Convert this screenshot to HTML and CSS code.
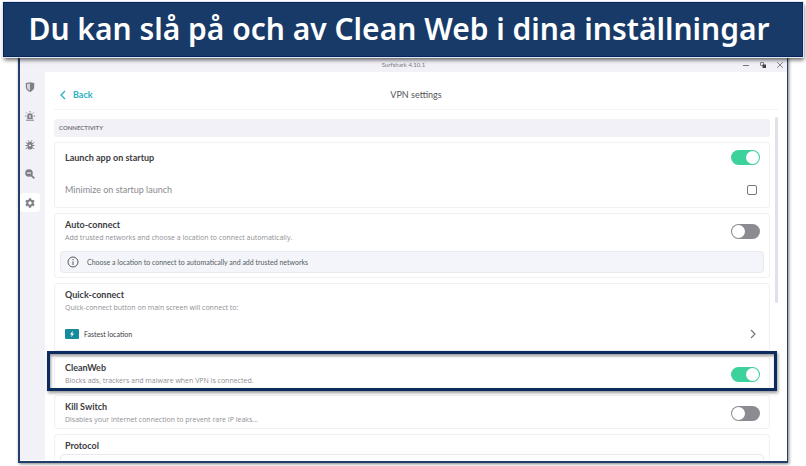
FILE: index.html
```html
<!DOCTYPE html>
<html lang="sv">
<head>
    <meta charset="UTF-8">
    <meta name="viewport" content="width=device-width, initial-scale=1.0">
    <title>VPN settings</title>
    <link rel="stylesheet" href="styles.css">
</head>
<body>

    <!-- Caption -->
    <h1 class="banner">Du kan slå på och av Clean Web i dina inställningar</h1>

    <div class="window" lang="en">
        <!-- Title bar -->
        <div class="titlebar">
            <span class="app-name">Surfshark 4.10.1</span>
            <div class="window-buttons">
                <button aria-label="Minimize"><svg width="8" height="8" viewBox="0 0 8 8"><path d="M1 4.5h6" stroke="#777" fill="none"/></svg></button>
                <button aria-label="Restore"><svg width="8" height="8" viewBox="0 0 8 8"><path d="M1.500 1.500h3v3h-3z" stroke="#888" fill="none"/><path d="M3.500 3.500H7V7H3.500z" fill="#444"/></svg></button>
                <button aria-label="Close"><svg width="8" height="8" viewBox="0 0 8 8"><path d="M1.200 1.200l5.600 5.600M6.800 1.200L1.200 6.800" stroke="#666" stroke-width=".8" fill="none"/></svg></button>
            </div>
        </div>

        <div class="main">
            <!-- Sidebar -->
            <nav class="sidebar">
                <a href="#vpn" aria-label="VPN">
                    <svg width="10" height="10" viewBox="0 0 10 10"><path d="M5 .3L9.200 1v4C9.200 7.500 7.300 9.200 5 9.900 2.700 9.200.8 7.500.8 5V1z" fill="#7f7f85"/><path d="M5 1.500l-3 .5v3c0 1.700 1.200 3 3 3.700z" fill="#d5d5db"/></svg>
                </a>
                <a href="#alert" aria-label="Alert">
                    <svg width="10" height="10" viewBox="0 0 10 10"><path d="M2.300 8V5a2.700 2.700 0 0 1 5.400 0v3z" fill="#7f7f85"/><path d="M5 4v3" stroke="#f2f1f8" stroke-width="1.200"/><path d="M1 9.200h8M5 0v1.400M1.300 1.500l1 1M8.700 1.500l-1 1M0 5h1.400M10 5H8.600" stroke="#7f7f85" fill="none"/></svg>
                </a>
                <a href="#antivirus" aria-label="Antivirus">
                    <svg width="10" height="10" viewBox="0 0 10 10"><rect x="2.500" y="1.800" width="5" height="7.700" rx="2.500" fill="#7f7f85"/><path d="M3 .3l1 1.500M7 .3L6 1.800M.8 2.500l2 1.200M9.200 2.500l-2 1.200M.5 5.500h9M.8 8.700l2-1.200M9.200 8.700l-2-1.200" stroke="#7f7f85" fill="none"/><path d="M4 5.500h2" stroke="#f2f1f8" stroke-width="1.500"/></svg>
                </a>
                <a href="#search" aria-label="Search">
                    <svg width="10" height="10" viewBox="0 0 10 10"><circle cx="4" cy="4" r="3.800" fill="#7f7f85"/><path d="M6.300 6.300l3 3" stroke="#7f7f85" stroke-width="1.800"/><path d="M2 4h4" stroke="#f2f1f8" stroke-width="1.200"/></svg>
                </a>
                <a href="#settings" aria-label="Settings" class="active">
                    <svg width="10" height="10" viewBox="0 0 10 10"><path d="M4 .3h2l.3 1.300 1 .6 1.300-.4 1 1.700-1 .9v1.200l1 .9-1 1.700-1.300-.4-1 .6L6 9.700H4l-.3-1.300-1-.6-1.300.4-1-1.700 1-.9V4.400l-1-.9 1-1.700 1.300.4 1-.6z" fill="#7f7f85"/><circle cx="5" cy="5" r="1.700" fill="#fff"/></svg>
                </a>
            </nav>

            <main class="content">
                <header class="page-header">
                    <a href="#back" class="back">
                        <svg width="6" height="10" viewBox="0 0 6 10"><path d="M5 1L1 5l4 4" fill="none" stroke="#2bb0be" stroke-width="1.300"/></svg>
                        Back
                    </a>
                    <h2>VPN settings</h2>
                </header>

                <!-- Settings list -->
                <div class="scroll-area">
                    <div class="list">
                        <h3 class="group-title">CONNECTIVITY</h3>

                        <section class="card">
                            <div class="row startup">
                                <label class="title" for="launch">Launch app on startup</label>
                                <input type="checkbox" class="toggle" id="launch" checked>
                            </div>
                            <div class="row minimize">
                                <label for="minimize">Minimize on startup launch</label>
                                <input type="checkbox" class="tick" id="minimize">
                            </div>
                        </section>

                        <section class="card">
                            <div class="row">
                                <div>
                                    <label class="title" for="auto">Auto-connect</label>
                                    <p>Add trusted networks and choose a location to connect automatically.</p>
                                </div>
                                <input type="checkbox" class="toggle" id="auto">
                            </div>
                            <div class="info">
                                <svg width="12" height="12" viewBox="0 0 12 12"><circle cx="6" cy="6" r="5" fill="none" stroke="#555b61"/><path d="M6 5.300V9M6 3v1.200" stroke="#555b61"/></svg>
                                Choose a location to connect to automatically and add trusted networks
                            </div>
                        </section>

                        <section class="card">
                            <div class="row">
                                <div>
                                    <h4 class="title">Quick-connect</h4>
                                    <p>Quick-connect button on main screen will connect to:</p>
                                </div>
                            </div>
                            <button class="location">
                                <svg width="14" height="10" viewBox="0 0 14 10"><rect width="14" height="10" rx="1" fill="#178a9b"/><path d="M7.800 1.800L5 5.500h1.700l-.5 2.700L9 4.500H7.300z" fill="#fff"/></svg>
                                Fastest location
                                <svg class="chevron" width="6" height="10" viewBox="0 0 6 10"><path d="M1 1l4 4-4 4" fill="none" stroke="#77777c" stroke-width="1.200"/></svg>
                            </button>
                        </section>

                        <section class="card highlighted">
                            <div class="row">
                                <div>
                                    <label class="title" for="cleanweb">CleanWeb</label>
                                    <p>Blocks ads, trackers and malware when VPN is connected.</p>
                                </div>
                                <input type="checkbox" class="toggle" id="cleanweb" checked>
                            </div>
                        </section>

                        <section class="card">
                            <div class="row">
                                <div>
                                    <label class="title" for="killswitch">Kill Switch</label>
                                    <p>Disables your internet connection to prevent rare IP leaks...</p>
                                </div>
                                <input type="checkbox" class="toggle" id="killswitch">
                            </div>
                        </section>

                        <section class="card">
                            <div class="row">
                                <h4 class="title">Protocol</h4>
                            </div>
                            <div class="info plain"></div>
                        </section>
                    </div>
                    <div class="scrollbar"></div>
                </div>
            </main>
        </div>
    </div>

</body>
</html>
```
FILE: styles.css
```css
* {
    box-sizing: border-box;
}

/* General styling for the page */
body {
    margin: 0;
    padding: 2px 3px 3px;
    height: 100vh;
    display: flex;
    flex-direction: column;
    background: #fff;
    font-family: Lato, "Open Sans", sans-serif;
    font-size: 8px;
    line-height: 12px;
    color: #3c3c41;
}

h1, h2, h3, h4, p {
    margin: 0;
    font-weight: 400;
}

button {
    padding: 0;
    border: none;
    background: none;
    font: inherit;
    color: inherit;
}

input {
    margin: 0;
    appearance: none;
}

svg {
    display: block;
    flex: none;
}

/* Caption over the window */
.banner {
    position: relative;
    z-index: 1;
    padding: 0 8px 2px 0;
    border: 1px solid #05265c;
    background: #183a68;
    box-shadow: 0 0 0 1px #e4e7ee, 1px 3px 4px rgba(0, 0, 0, 0.6);
    color: #fff;
    font-family: "Noto Sans", sans-serif;
    font-size: 30px;
    font-weight: 600;
    line-height: 51px;
    text-align: center;
    white-space: nowrap;
}

/* Application window */
.window {
    flex: 1;
    min-height: 0;
    display: flex;
    flex-direction: column;
    margin: 0 15px;
    padding-bottom: 1px;
    border: 1px solid #203f6b;
    border-width: 0 1px 2px 2px;
    box-shadow: 1px 1px 3px rgba(0, 0, 0, 0.5);
}

.titlebar {
    height: 15px;
    display: grid;
    grid-template-columns: 1fr auto 1fr;
    align-items: center;
    background: #f2f1f8;
}

.app-name {
    grid-column: 2;
    font-size: 6px;
    color: #77777c;
}

.window-buttons {
    display: flex;
    justify-content: flex-end;
    gap: 9px;
    padding-right: 3px;
}

.main {
    flex: 1;
    min-height: 0;
    display: flex;
}

/* Sidebar with icons */
.sidebar {
    width: 25px;
    display: flex;
    flex-direction: column;
    gap: 10px;
    padding-top: 5px;
    background: #f2f1f8;
}

.sidebar a {
    width: 20px;
    height: 19px;
    display: grid;
    place-items: center;
    border-radius: 4px;
}

.sidebar .active {
    background: #fff;
}

.content {
    flex: 1;
    min-width: 0;
    display: flex;
    flex-direction: column;
    padding: 0 9px;
}

.page-header {
    height: 38px;
    display: grid;
    grid-template-columns: 1fr auto 1fr;
    align-items: center;
    padding: 8px 0 0;
    border-bottom: 1px solid #f3f3f5;
}

.page-header h2 {
    font-size: 9px;
    color: #555559;
}

.back {
    display: flex;
    align-items: center;
    gap: 7px;
    padding-left: 6px;
    color: #2bb0be;
    font-size: 9px;
    font-weight: 700;
    text-decoration: none;
}

/* Settings list */
.scroll-area {
    flex: 1;
    min-height: 0;
    display: flex;
    align-items: flex-start;
    gap: 5px;
    margin: 0 -9px;
    padding: 7px 9px 0;
    overflow: hidden;
}

.list {
    flex: 1;
    display: flex;
    flex-direction: column;
    gap: 5px;
    padding-top: 2px;
}

.scrollbar {
    width: 3px;
    height: 186px;
    border-radius: 2px;
    background: #e1e0e8;
}

.group-title {
    padding: 3px 5px;
    border-radius: 3px;
    background: #f2f1f8;
    color: #77777c;
    font-size: 6px;
    font-weight: 700;
}

.card {
    border: 1px solid #f1f1f4;
    border-radius: 3px;
}

.row {
    display: flex;
    align-items: center;
    justify-content: space-between;
    padding: 5px 9px 2px 10px;
}

.title {
    display: block;
    font-size: 9px;
    font-weight: 700;
    color: #3c3c41;
}

.row p {
    font-family: "Open Sans", sans-serif;
    font-size: 7px;
    line-height: 13px;
    color: #8f8f95;
}

.row.startup {
    padding-top: 7px;
    padding-bottom: 4px;
}

.row.minimize {
    padding: 15px 12px 11px 10px;
    font-size: 9px;
    color: #8a8a90;
}

/* Switches and tick box */
.toggle {
    width: 29px;
    height: 15px;
    display: flex;
    align-items: center;
    padding: 1px;
    border-radius: 8px;
    background: #8c8b91;
}

.toggle::before {
    content: "";
    width: 13px;
    height: 13px;
    border-radius: 50%;
    background: #fff;
}

.toggle:checked {
    justify-content: flex-end;
    background: #3dd19c;
}

.tick {
    width: 10px;
    height: 10px;
    border: 1px solid #77777c;
    border-radius: 2px;
}

/* Info box */
.info {
    display: flex;
    align-items: center;
    gap: 8px;
    margin: 5px 5px 4px;
    padding: 4px 6px;
    border: 1px solid #e6e9ee;
    border-radius: 4px;
    background: #f3f5fa;
    color: #555b61;
    font-size: 7px;
}

.info.plain {
    height: 20px;
    margin-top: 0;
    background: #fff;
}

/* Location picker */
.location {
    width: 100%;
    display: flex;
    align-items: center;
    gap: 5px;
    padding: 12px 13px 10px 10px;
    font-size: 7px;
}

.chevron {
    margin-left: auto;
}

/* Frame round the highlighted setting */
.highlighted {
    position: relative;
}

.highlighted::after {
    content: "";
    position: absolute;
    inset: -6px -8px -2px;
    border: 3px solid #0c2c60;
    box-shadow: 1px 2px 3px rgba(0, 0, 0, 0.4), inset 1px 2px 3px rgba(0, 0, 0, 0.4);
    pointer-events: none;
}
```
